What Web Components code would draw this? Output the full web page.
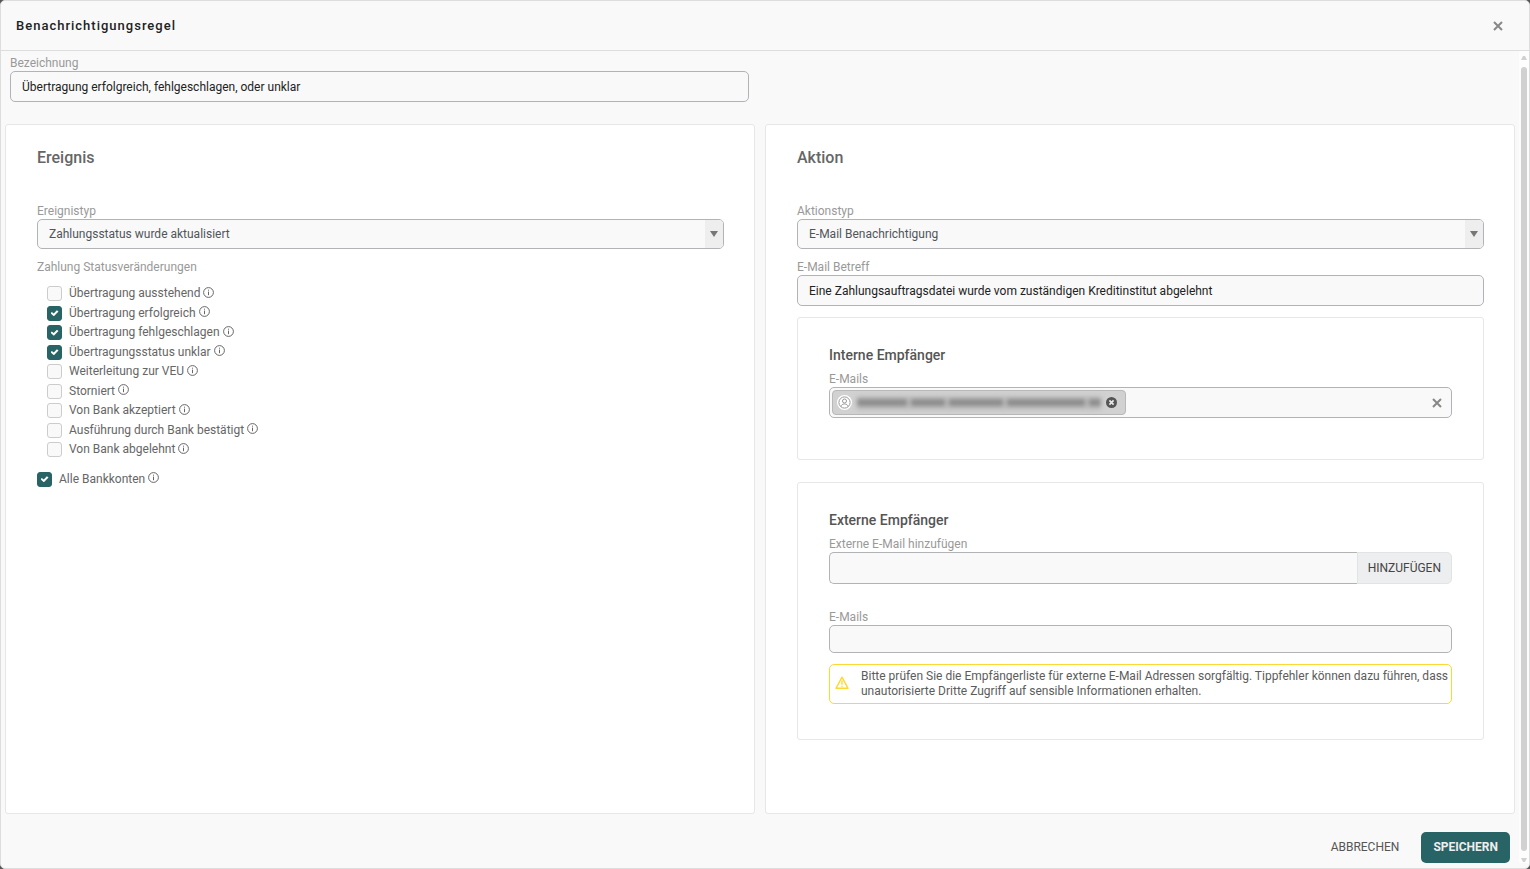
<!DOCTYPE html>
<html lang="de">
<head>
<meta charset="utf-8">
<title>Benachrichtigungsregel</title>
<style>
    body {
        margin: 0;
        background-color: #555;
        font-family: Roboto, "Liberation Sans", sans-serif;
        font-size: 12px;
    }
</style>
</head>
<body>
<rule-dialog heading="Benachrichtigungsregel">
    <text-field slot="name" label="Bezeichnung" value="Übertragung erfolgreich, fehlgeschlagen, oder unklar"></text-field>

    <form-card heading="Ereignis">
        <select-field label="Ereignistyp" value="Zahlungsstatus wurde aktualisiert"></select-field>
        <check-group label="Zahlung Statusveränderungen">
            <check-option label="Übertragung ausstehend"></check-option>
            <check-option label="Übertragung erfolgreich" checked></check-option>
            <check-option label="Übertragung fehlgeschlagen" checked></check-option>
            <check-option label="Übertragungsstatus unklar" checked></check-option>
            <check-option label="Weiterleitung zur VEU"></check-option>
            <check-option label="Storniert"></check-option>
            <check-option label="Von Bank akzeptiert"></check-option>
            <check-option label="Ausführung durch Bank bestätigt"></check-option>
            <check-option label="Von Bank abgelehnt"></check-option>
        </check-group>
        <check-option label="Alle Bankkonten" checked></check-option>
    </form-card>

    <form-card heading="Aktion">
        <select-field label="Aktionstyp" value="E-Mail Benachrichtigung"></select-field>
        <text-field label="E-Mail Betreff" value="Eine Zahlungsauftragsdatei wurde vom zuständigen Kreditinstitut abgelehnt"></text-field>
        <recipient-box heading="Interne Empfänger">
            <token-field label="E-Mails"></token-field>
        </recipient-box>
        <recipient-box heading="Externe Empfänger">
            <add-field label="Externe E-Mail hinzufügen" button-text="HINZUFÜGEN"></add-field>
            <text-field label="E-Mails" compact></text-field>
            <warning-note>Bitte prüfen Sie die Empfängerliste für externe E-Mail Adressen sorgfältig. Tippfehler können dazu führen, dass unautorisierte Dritte Zugriff auf sensible Informationen erhalten.</warning-note>
        </recipient-box>
    </form-card>

    <action-button slot="actions">ABBRECHEN</action-button>
    <action-button slot="actions" primary>SPEICHERN</action-button>
</rule-dialog>

<script>
// Shared by every labelled control
const fieldStyles = `
    :host {
        display: block;
    }
    label, .label {
        display: block;
        padding-top: 2px;
        line-height: 16px;
        color: #999;
    }
    input, select, button {
        box-sizing: border-box;
        margin: 0;
        font: inherit;
    }
    input[type="text"], select {
        display: block;
        width: 100%;
        height: 31px;
        padding: 0 11px;
        border: 1px solid #b1b3b6;
        border-radius: 5px;
        background-color: #f9f9f9;
        color: #222;
        outline: none;
    }
`;

const crossIcon = `
    <svg width="10" height="10" viewBox="0 0 10 10" aria-hidden="true">
        <path d="M1 1L9 9M9 1L1 9" fill="none" stroke="#888" stroke-width="2"/>
    </svg>
`;

class BaseElement extends HTMLElement {
    constructor() {
        super();
        this.attachShadow({ mode: 'open' });
    }

    connectedCallback() {
        this.shadowRoot.innerHTML = this.template();
    }

    attr(name) {
        return this.getAttribute(name) || '';
    }
}

class RuleDialog extends BaseElement {
    template() {
        return `
            <style>
                :host {
                    display: flex;
                    flex-direction: column;
                    box-sizing: border-box;
                    min-height: 100vh;
                    border: 1px solid #ddd;
                    border-radius: 5px;
                    background-color: #f9f9f9;
                }
                header {
                    display: flex;
                    align-items: center;
                    justify-content: space-between;
                    height: 49px;
                    padding: 0 26px 0 15px;
                    border-bottom: 1px solid #ddd;
                }
                h1 {
                    margin: 0;
                    font-size: 13px;
                    font-weight: 500;
                    letter-spacing: 1px;
                    color: #222;
                }
                header button {
                    display: flex;
                    padding: 0;
                    border: none;
                    background: none;
                    cursor: pointer;
                }
                .body {
                    display: flex;
                    flex: 1;
                }
                .content {
                    display: flex;
                    flex-direction: column;
                    flex: 1;
                }
                .name {
                    width: 50%;
                    box-sizing: border-box;
                    padding: 2px 11px 0 9px;
                }
                .cards {
                    display: grid;
                    grid-template-columns: 1fr 1fr;
                    gap: 10px;
                    flex: 1;
                    padding: 22px 4px 0;
                }
                footer {
                    display: flex;
                    justify-content: flex-end;
                    gap: 10px;
                    padding: 18px 9px 5px;
                }
            </style>
            <header>
                <h1>${this.attr('heading')}</h1>
                <button type="button" aria-label="Schließen">${crossIcon}</button>
            </header>
            <div class="body">
                <div class="content">
                    <div class="name"><slot name="name"></slot></div>
                    <div class="cards"><slot></slot></div>
                    <footer><slot name="actions"></slot></footer>
                </div>
                <scroll-track></scroll-track>
            </div>
        `;
    }
}

class ScrollTrack extends BaseElement {
    template() {
        return `
            <style>
                :host {
                    display: flex;
                    flex-direction: column;
                    align-items: center;
                    gap: 7px;
                    width: 10px;
                    margin-bottom: 5px;
                    padding: 5px 0 1px;
                    box-sizing: border-box;
                    background-color: #fdfdfd;
                }
                .thumb {
                    flex: 1;
                    width: 6px;
                    border-radius: 3px;
                    background-color: #d1d1d1;
                }
                svg {
                    display: block;
                }
            </style>
            <svg width="6" height="4" viewBox="0 0 6 4"><path d="M0 4L2 0H4L6 4z" fill="#d1d1d1"/></svg>
            <div class="thumb"></div>
            <svg width="6" height="4" viewBox="0 0 6 4"><path d="M0 0L2 4H4L6 0z" fill="#d1d1d1"/></svg>
        `;
    }
}

class FormCard extends BaseElement {
    template() {
        return `
            <style>
                :host {
                    display: flex;
                    flex-direction: column;
                    min-width: 0;
                    padding: 21px 30px 20px 31px;
                    border: 1px solid #e7e7e7;
                    border-radius: 3px;
                    background-color: #fff;
                }
                h2 {
                    margin: 0 0 31px;
                    font-size: 16px;
                    font-weight: 500;
                    line-height: 24px;
                    color: #666;
                }
                ::slotted(text-field), ::slotted(check-group) {
                    margin-top: 8px;
                }
                ::slotted(check-option) {
                    margin-top: 10px;
                }
                ::slotted(recipient-box) {
                    margin: 11px 0;
                }
            </style>
            <h2>${this.attr('heading')}</h2>
            <slot></slot>
        `;
    }
}

class RecipientBox extends BaseElement {
    template() {
        return `
            <style>
                :host {
                    display: block;
                    padding: 27px 31px 35px;
                    border: 1px solid #e7e7e7;
                    border-radius: 3px;
                }
                h3 {
                    margin: 0 0 4px;
                    font-size: 14px;
                    font-weight: 500;
                    line-height: 20px;
                    color: #555;
                }
                ::slotted(token-field) {
                    margin-bottom: 6px;
                }
                ::slotted(text-field) {
                    margin-top: 23px;
                }
                ::slotted(warning-note) {
                    margin-top: 11px;
                }
            </style>
            <h3>${this.attr('heading')}</h3>
            <slot></slot>
        `;
    }
}

class TextField extends BaseElement {
    template() {
        return `
            <style>
                ${fieldStyles}
                :host([compact]) input[type="text"] {
                    height: 28px;
                }
            </style>
            <label for="field">${this.attr('label')}</label>
            <input type="text" id="field" value="${this.attr('value')}">
        `;
    }
}

class SelectField extends BaseElement {
    template() {
        return `
            <style>
                ${fieldStyles}
                .wrap {
                    display: grid;
                }
                .wrap > * {
                    grid-area: 1 / 1;
                }
                select {
                    height: 30px;
                    appearance: none;
                    color: #50565b;
                }
                .arrow {
                    display: flex;
                    align-items: center;
                    justify-content: center;
                    justify-self: end;
                    width: 18px;
                    margin: 1px;
                    border-radius: 0 4px 4px 0;
                    background-color: #eee;
                    pointer-events: none;
                }
            </style>
            <label for="field">${this.attr('label')}</label>
            <div class="wrap">
                <select id="field"><option>${this.attr('value')}</option></select>
                <span class="arrow">
                    <svg width="8" height="6" viewBox="0 0 8 6"><path d="M0 0H8L4 6z" fill="#777"/></svg>
                </span>
            </div>
        `;
    }
}

class CheckGroup extends BaseElement {
    template() {
        return `
            <style>
                ${fieldStyles}
                .options {
                    padding: 9px 0 0 10px;
                }
            </style>
            <div role="group" aria-labelledby="title">
                <span class="label" id="title">${this.attr('label')}</span>
                <div class="options"><slot></slot></div>
            </div>
        `;
    }
}

class CheckOption extends BaseElement {
    template() {
        return `
            <style>
                :host {
                    display: flex;
                    align-items: center;
                    font-size: 13px;
                    line-height: 1.5em;
                    color: #666;
                }
                input {
                    display: grid;
                    place-content: center;
                    appearance: none;
                    box-sizing: border-box;
                    width: 15px;
                    height: 15px;
                    margin: 0 7px 0 0;
                    border: 1px solid #ccc;
                    border-radius: 3px;
                    background-color: #f9f9f9;
                }
                input:checked {
                    border-color: #286365;
                    background-color: #286365;
                }
                input:checked::after {
                    content: "";
                    width: 8px;
                    height: 6px;
                    background-color: #fff;
                    clip-path: polygon(0 52%, 17% 28%, 40% 56%, 80% 0, 100% 20%, 42% 100%);
                }
                label {
                    font-size: 12px;
                }
                svg {
                    margin: 0 0 3px 3px;
                }
            </style>
            <input type="checkbox" id="box" ${this.hasAttribute('checked') ? 'checked' : ''}>
            <label for="box">${this.attr('label')}</label>
            <svg width="11" height="11" viewBox="0 0 11 11" aria-hidden="true">
                <circle cx="5.5" cy="5.5" r="4.9" fill="none" stroke="#666" stroke-width="1"/>
                <path d="M5.5 4.6V8.2M5.5 2.7V3.7" stroke="#666" stroke-width="1"/>
            </svg>
        `;
    }
}

class TokenField extends BaseElement {
    template() {
        return `
            <style>
                ${fieldStyles}
                .box {
                    display: flex;
                    align-items: center;
                    height: 29px;
                    padding: 0 9px 0 2px;
                    border: 1px solid #b1b3b6;
                    border-radius: 5px;
                    background-color: #f9f9f9;
                }
                .token {
                    display: flex;
                    align-items: center;
                    box-sizing: border-box;
                    width: 294px;
                    height: 25px;
                    padding: 0 8px 0 4px;
                    border: 1px solid #b8b8b8;
                    border-radius: 4px;
                    background-color: #d1d1d1;
                }
                /* recipient is kept unreadable */
                .masked {
                    display: flex;
                    align-items: center;
                    gap: 4px;
                    flex: 1;
                    height: 14px;
                    margin: 0 5px;
                    background-color: #bdbdbd;
                    filter: blur(2px);
                }
                .masked i {
                    height: 7px;
                    background-color: #8c8c8c;
                }
                .box input[type="text"] {
                    flex: 1;
                    width: auto;
                    min-width: 0;
                    height: 25px;
                    border: none;
                    background: none;
                }
                button {
                    display: flex;
                    padding: 0;
                    border: none;
                    background: none;
                    cursor: pointer;
                }
            </style>
            <label for="field">${this.attr('label')}</label>
            <div class="box">
                <div class="token">
                    <svg width="15" height="15" viewBox="0 0 15 15" aria-hidden="true">
                        <circle cx="7.5" cy="7.5" r="7.5" fill="#fff"/>
                        <g fill="none" stroke="#999" stroke-width="1">
                            <circle cx="7.5" cy="7.5" r="5.6"/>
                            <circle cx="7.5" cy="6" r="2"/>
                            <path d="M4 11.6C4.4 9.6 5.6 9 7.5 9S10.6 9.6 11 11.6"/>
                        </g>
                    </svg>
                    <span class="masked">
                        <i style="flex: 50"></i>
                        <i style="flex: 34"></i>
                        <i style="flex: 54"></i>
                        <i style="flex: 78"></i>
                        <i style="flex: 12"></i>
                    </span>
                    <button type="button" aria-label="Empfänger entfernen">
                        <svg width="11" height="11" viewBox="0 0 11 11">
                            <circle cx="5.5" cy="5.5" r="5.5" fill="#555"/>
                            <path d="M3.4 3.4L7.6 7.6M7.6 3.4L3.4 7.6" stroke="#e8e8e8" stroke-width="1.7"/>
                        </svg>
                    </button>
                </div>
                <input type="text" id="field">
                <button type="button" aria-label="Alle entfernen">${crossIcon}</button>
            </div>
        `;
    }
}

class AddField extends BaseElement {
    template() {
        return `
            <style>
                ${fieldStyles}
                .row {
                    display: flex;
                }
                .row input[type="text"] {
                    flex: 1;
                    width: auto;
                    height: 32px;
                    border-right: none;
                    border-radius: 5px 0 0 5px;
                }
                button {
                    padding: 0 10px;
                    border: 1px solid #e2e3e5;
                    border-radius: 0 5px 5px 0;
                    background-color: #edeef0;
                    color: #444;
                    cursor: pointer;
                }
            </style>
            <label for="field">${this.attr('label')}</label>
            <div class="row">
                <input type="text" id="field">
                <button type="button">${this.attr('button-text')}</button>
            </div>
        `;
    }
}

class WarningNote extends BaseElement {
    template() {
        return `
            <style>
                :host {
                    display: flex;
                    align-items: center;
                    gap: 12px;
                    padding: 4px 0 4px 5px;
                    border: 1px solid #fdd835;
                    border-radius: 5px;
                    line-height: 15px;
                    color: #5c5c5c;
                }
                svg {
                    flex: none;
                    margin-bottom: 3px;
                }
            </style>
            <svg width="14" height="13" viewBox="0 0 14 13" aria-hidden="true">
                <path d="M7 1.2L13 12.3H1z" fill="none" stroke="#fdd835" stroke-width="1.4" stroke-linejoin="round"/>
                <path d="M7 4.6V8.8M7 9.8V11" stroke="#fdd835" stroke-width="1.4"/>
            </svg>
            <span><slot></slot></span>
        `;
    }
}

class ActionButton extends BaseElement {
    template() {
        return `
            <style>
                :host {
                    display: block;
                }
                button {
                    height: 31px;
                    padding: 0 11px 2px;
                    border: 1px solid transparent;
                    border-radius: 5px;
                    background: none;
                    font: inherit;
                    color: #555;
                    cursor: pointer;
                }
                :host([primary]) button {
                    background-color: #286365;
                    font-weight: 700;
                    color: #eee;
                }
            </style>
            <button type="button"><slot></slot></button>
        `;
    }
}

customElements.define('scroll-track', ScrollTrack);
customElements.define('rule-dialog', RuleDialog);
customElements.define('form-card', FormCard);
customElements.define('recipient-box', RecipientBox);
customElements.define('text-field', TextField);
customElements.define('select-field', SelectField);
customElements.define('check-group', CheckGroup);
customElements.define('check-option', CheckOption);
customElements.define('token-field', TokenField);
customElements.define('add-field', AddField);
customElements.define('warning-note', WarningNote);
customElements.define('action-button', ActionButton);
</script>
</body>
</html>
